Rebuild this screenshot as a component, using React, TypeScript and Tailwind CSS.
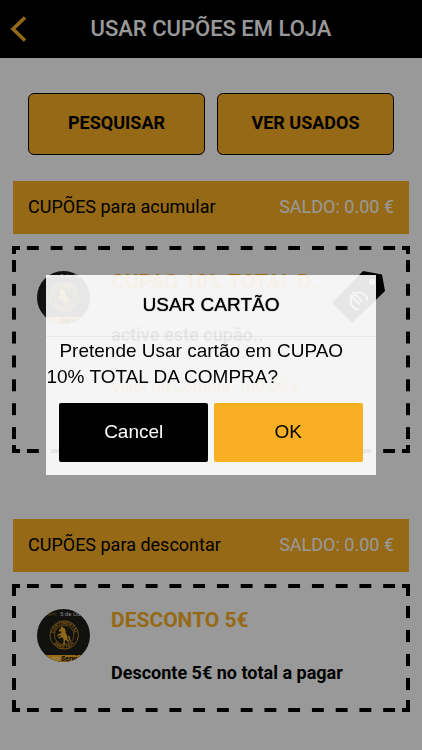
import React from "react";

function DashedFrame({ children, tall }: { children: React.ReactNode; tall?: boolean }) {
  const across =
    "absolute inset-x-[9px] h-1 bg-[linear-gradient(to_right,transparent_25%,#000_25%,#000_75%,transparent_75%)] bg-[length:24px_4px] bg-repeat-round";
  const down =
    "absolute w-1 bg-[linear-gradient(to_bottom,transparent_25%,#000_25%,#000_75%,transparent_75%)] bg-[length:4px_24px] bg-repeat-round " +
    (tall ? "inset-y-2" : "inset-y-4");
  const corner = "absolute w-2 border-black " + (tall ? "h-2" : "h-3");
  return (
    <article className={"relative mx-3 mt-3 flex px-[25px] pt-[25px] " + (tall ? "h-[207px]" : "h-32")}>
      <div aria-hidden="true" className="pointer-events-none absolute inset-0">
        <span className={across + " top-0"} />
        <span className={across + " bottom-0"} />
        <span className={down + " left-0"} />
        <span className={down + " right-0"} />
        <span className={corner + " left-0 top-0 border-l-4 border-t-4"} />
        <span className={corner + " right-0 top-0 border-r-4 border-t-4"} />
        <span className={corner + " bottom-0 left-0 border-b-4 border-l-4"} />
        <span className={corner + " bottom-0 right-0 border-b-4 border-r-4"} />
      </div>
      {children}
    </article>
  );
}

function Logo() {
  return (
    <svg viewBox="0 0 53 53" className="h-[53px] w-[53px] shrink-0" role="img" aria-label="Continental">
      <defs>
        <clipPath id="disc">
          <circle cx="26.5" cy="26.5" r="26.5" />
        </clipPath>
        <path id="arcTop" d="M16.7 26a10.500 10.500 0 0 1 21 0" />
        <path id="arcBottom" d="M13.700 26a13.500 13.500 0 0 0 27 0" />
      </defs>
      <g clipPath="url(#disc)" fontFamily="Roboto, sans-serif">
        <rect width="53" height="53" fill="#1d1d1b" />
        <text x="11" y="7" fontSize="6" fill="#8a6420">em</text>
        <text x="23" y="7" fontSize="6" fill="#d8d8d8">5 de Out</text>
        <circle cx="27.200" cy="26" r="14.200" fill="none" stroke="#c88c22" strokeWidth="0.9" />
        <circle cx="27.200" cy="26" r="9.800" fill="none" stroke="#c88c22" strokeWidth="0.8" />
        <text fontSize="4.400" fontWeight="700" fill="#d99824" textAnchor="middle">
          <textPath href="#arcTop" startOffset="50%">CONTINENTAL</textPath>
        </text>
        <text fontSize="4.400" fontWeight="700" fill="#d99824" textAnchor="middle">
          <textPath href="#arcBottom" startOffset="50%">SINCE 1871</textPath>
        </text>
        <path
          fill="#f0aa28"
          d="M24.6 17.2l1.2 1 2 1.2.8 2.2.2 2.6 1.2 2 .6 2.200-.4 1.600 1.600 1.400-.2 2.400-1-.2-.2-1.600-2-1.200-.8 2.200.8 1.600-.6.8-1.800-.4.6-3.200-.2-2-1.600-1.800-1.800 1.200-1.800-.4.2-.8 1.600-.2 1-1.800-2 .2-1.200 1.400-.8-.6 1.200-2 2.600-.6.6-2.400-1.800.8-1.200-.8 2-2.200zM31 26.600l1.800 1.200.4 2.800 1 1.600-2-.8-.8-2.600z"
        />
        <rect y="46" width="53" height="7" fill="#f9af24" />
        <text x="15" y="52" fontSize="7" fill="#fff0bd">mi</text>
        <text x="24" y="52" fontSize="7" fontStyle="italic" fontWeight="900" fill="#1d1d1b">Servi</text>
      </g>
    </svg>
  );
}

function EuroTag() {
  return (
    <svg viewBox="0 0 54 54" className="absolute right-[24px] top-[24px] h-[54px] w-[54px]" role="img" aria-label="Euro">
      <path d="M31 1L50 4.500 53 21 20 53 0 33z" fill="#000" />
      <circle cx="40" cy="12" r="3" fill="#fff" />
      <g fill="none" stroke="#fff" strokeWidth="2.2" transform="translate(27 31) rotate(45)">
        <path d="M6-6a8.500 8.500 0 1 0 0 12M-11-2H3M-11 2H3" />
      </g>
    </svg>
  );
}

function Balance({ label }: { label: string }) {
  return (
    <h2 className="mx-[13px] flex h-[53px] items-center justify-between bg-[#f9af24] px-[15px] pb-[2px] text-[18px] font-normal text-black">
      <span>{label}</span>
      <span className="text-white">SALDO: 0.00 €</span>
    </h2>
  );
}

export default function App() {
  const action = "h-[62px] flex-1 rounded-md border border-black bg-[#f9af24] pb-[3px] text-[18px] font-bold text-black";
  return (
    <div className="min-h-screen bg-white font-['Roboto',sans-serif] text-black">
      <header className="grid h-[58px] grid-cols-[44px_1fr_44px] items-center bg-black">
        <button type="button" aria-label="Voltar" className="flex h-full items-center pl-[10px]">
          <svg viewBox="0 0 18 26" className="h-[26px] w-[18px]" fill="none" stroke="#f9af24" strokeWidth="3.5">
            <path d="M15 1.500L3 13 15 24.500" />
          </svg>
        </button>
        <h1 className="pb-[2px] text-center text-[22px] font-medium text-white">USAR CUPÕES EM LOJA</h1>
      </header>

      <main className="pb-8">
        <div className="mb-[26px] flex gap-3 px-7 pt-[35px]">
          <button type="button" className={action}>PESQUISAR</button>
          <button type="button" className={action}>VER USADOS</button>
        </div>

        <section>
          <Balance label="CUPÕES para acumular" />
          <DashedFrame tall>
            <Logo />
            <div className="ml-[21px] font-bold">
              <h3 className="text-[21px] leading-[22px] text-[#f9af24]">CUPAO 10% TOTAL D...</h3>
              <p className="mt-[30px] text-lg leading-6">active este cupão..</p>
              <p className="mt-7 text-base font-normal leading-6 text-[#f9af24]">Valor da Compra: 100.00 €</p>
            </div>
            <EuroTag />
          </DashedFrame>
        </section>

        <section className="mt-[66px]">
          <Balance label="CUPÕES para descontar" />
          <DashedFrame>
            <Logo />
            <div className="ml-[21px] font-bold">
              <h3 className="text-[21px] leading-[22px] text-[#f9af24]">DESCONTO 5€</h3>
              <p className="mt-[30px] text-lg leading-6">Desconte 5€ no total a pagar</p>
            </div>
          </DashedFrame>
        </section>
      </main>

      <div className="fixed inset-0 flex items-center justify-center bg-black/40">
        <div
          role="dialog"
          aria-modal="true"
          aria-labelledby="dialog-title"
          className="w-[78%] bg-white/90 pb-[13px] font-['Liberation_Sans',Arial,sans-serif]"
        >
          <h2
            id="dialog-title"
            className="mb-px h-[62px] border-b border-black/5 text-center text-[19px] leading-[60px] [text-shadow:0_0_1px_#000]"
          >
            USAR CARTÃO
          </h2>
          <p className="indent-[13px] text-[19px] leading-[26px]">Pretende Usar cartão em CUPAO 10% TOTAL DA COMPRA?</p>
          <div className="mt-[13px] flex gap-[6px] px-[13px] text-[19px]">
            <button type="button" className="h-[59px] flex-1 rounded-xs bg-black text-white">Cancel</button>
            <button type="button" className="h-[59px] flex-1 rounded-xs bg-[#f9af24] text-black">OK</button>
          </div>
        </div>
      </div>
    </div>
  );
}
